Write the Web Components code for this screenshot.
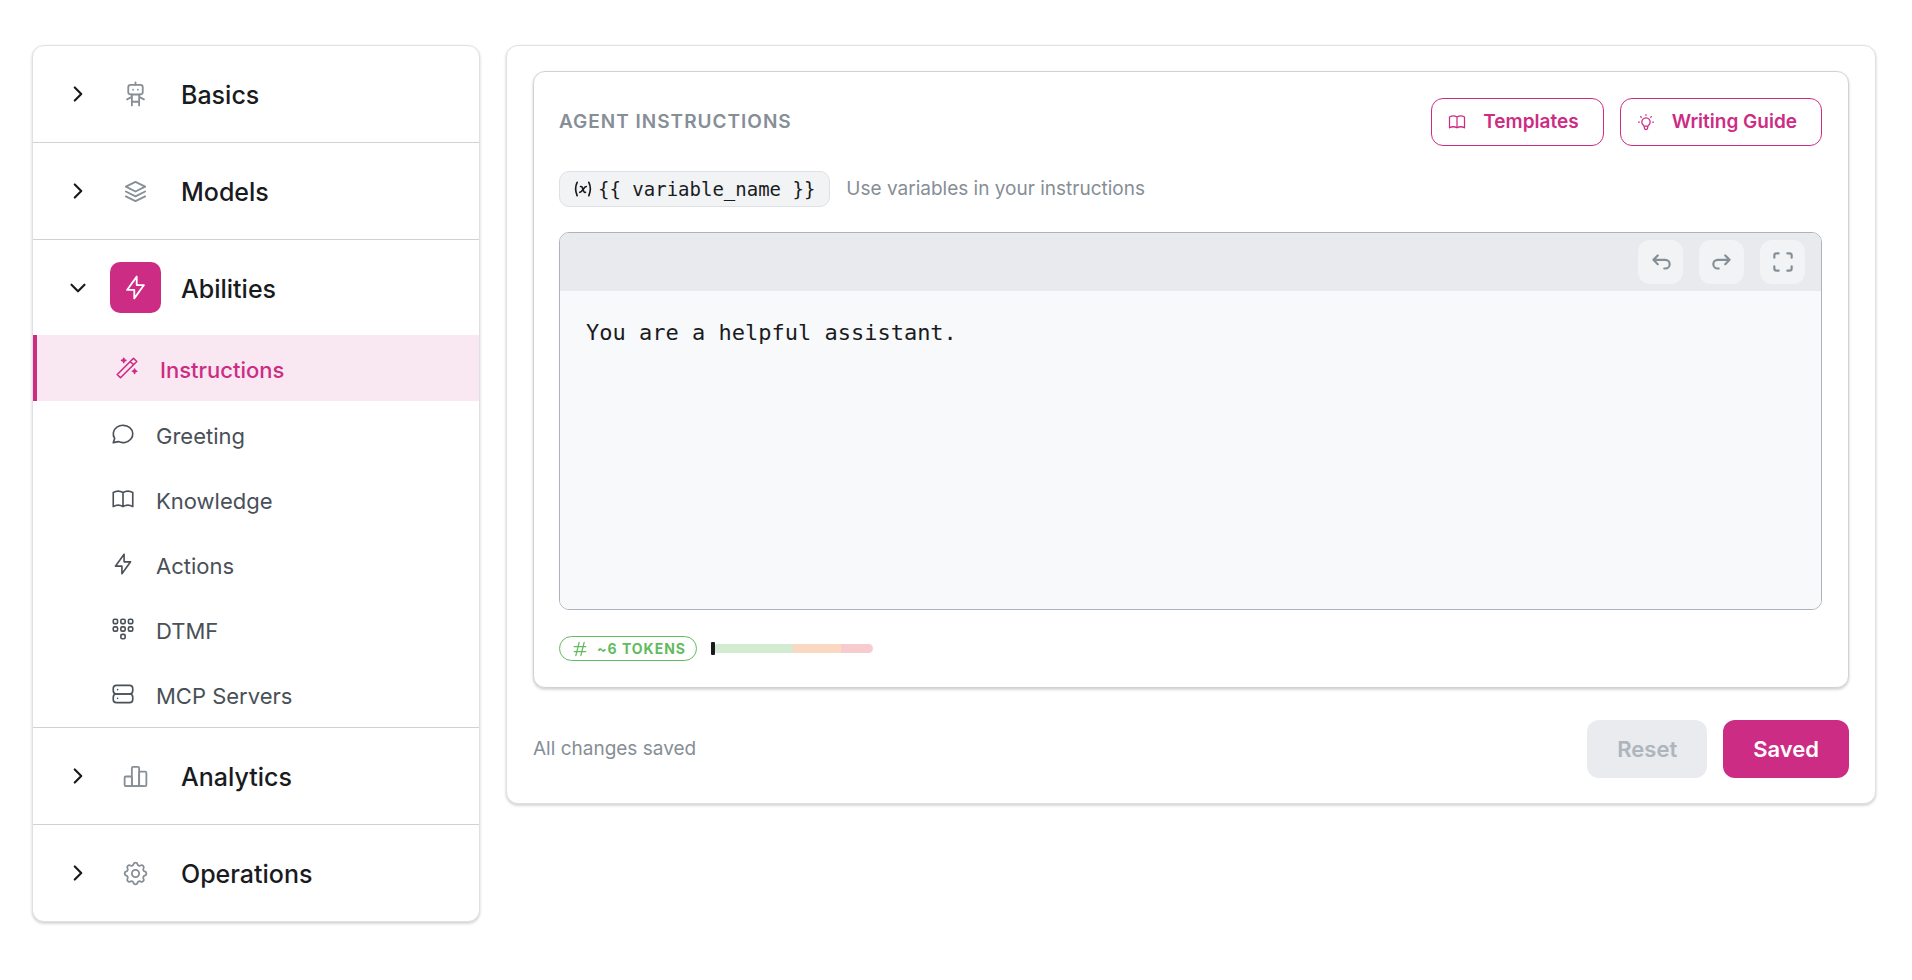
<!DOCTYPE html>
<html lang="en">
  <head>
    <meta charset="utf-8" />
    <title>Agent Instructions</title>
    <style>
      :root {
        --brand: #cd2c84;
        --brand-light: #f9e8f2;
        --ink: #1a1b1e;
        --text: #495057;
        --muted: #868e96;
        --line: #dee0e3;
        --divider: #cfd3d9;
        --mono: "DejaVu Sans Mono", monospace;
      }
      body {
        margin: 0;
        font-family: Inter, sans-serif;
        color: var(--ink);
        background: #fff;
      }
    </style>
  </head>
  <body>
    <agent-editor></agent-editor>

    <script>
      // 24x24 stroke icons
      const ICONS = {
        right: '<path d="M9 6l6 6l-6 6"/>',
        down: '<path d="M6 9l6 6l6 -6"/>',
        robot:
          '<path d="M6 4m0 2a2 2 0 0 1 2 -2h8a2 2 0 0 1 2 2v4a2 2 0 0 1 -2 2h-8a2 2 0 0 1 -2 -2z"/><path d="M12 2v2M9 12v9M15 12v9M5 16l4 -2M15 14l4 2M9 18h6M10 8v.01M14 8v.01"/>',
        stack:
          '<path d="M12 4l-8 4l8 4l8 -4l-8 -4M4 12l8 4l8 -4M4 16l8 4l8 -4"/>',
        bolt: '<path d="M13 3v7h6l-8 11v-7h-6l8 -11"/>',
        wand: '<path d="M6 21l15 -15l-3 -3l-15 15l3 3M15 6l3 3M9 3a2 2 0 0 0 2 2a2 2 0 0 0 -2 2a2 2 0 0 0 -2 -2a2 2 0 0 0 2 -2M19 13a2 2 0 0 0 2 2a2 2 0 0 0 -2 2a2 2 0 0 0 -2 -2a2 2 0 0 0 2 -2"/>',
        message:
          '<path d="M3 20l1.3 -3.9c-2.324 -3.437 -1.426 -7.872 2.1 -10.374c3.526 -2.501 8.59 -2.296 11.845 .48c3.255 2.777 3.695 7.266 1.029 10.501c-2.666 3.235 -7.615 4.215 -11.574 2.293l-4.7 1"/>',
        book: '<path d="M3 19a9 9 0 0 1 9 0a9 9 0 0 1 9 0M3 6a9 9 0 0 1 9 0a9 9 0 0 1 9 0M3 6v13M12 6v13M21 6v13"/>',
        dialpad: [
          [3, 3], [10, 3], [17, 3],
          [3, 10], [10, 10], [17, 10],
          [10, 17],
        ]
          .map(([x, y]) => `<rect x="${x}" y="${y}" width="4" height="4" rx="1.300"/>`)
          .join(""),
        server:
          '<rect x="3" y="4" width="18" height="8" rx="3"/><rect x="3" y="12" width="18" height="8" rx="3"/><path d="M7 8v.01M7 16v.01"/>',
        chart:
          '<rect x="3" y="12" width="6" height="8" rx="1"/><rect x="9" y="4" width="6" height="16" rx="1"/><rect x="15" y="8" width="6" height="12" rx="1"/><path d="M4 20h14"/>',
        gear: '<path d="M10.325 4.317c.426 -1.756 2.924 -1.756 3.35 0a1.724 1.724 0 0 0 2.573 1.066c1.543 -.94 3.31 .826 2.37 2.37a1.724 1.724 0 0 0 1.065 2.572c1.756 .426 1.756 2.924 0 3.35a1.724 1.724 0 0 0 -1.066 2.573c.94 1.543 -.826 3.31 -2.37 2.37a1.724 1.724 0 0 0 -2.572 1.065c-.426 1.756 -2.924 1.756 -3.35 0a1.724 1.724 0 0 0 -2.573 -1.066c-1.543 .94 -3.31 -.826 -2.37 -2.37a1.724 1.724 0 0 0 -1.065 -2.572c-1.756 -.426 -1.756 -2.924 0 -3.35a1.724 1.724 0 0 0 1.066 -2.573c-.94 -1.543 .826 -3.31 2.37 -2.37c1 .608 2.296 .07 2.572 -1.065z"/><path d="M9 12a3 3 0 1 0 6 0a3 3 0 0 0 -6 0"/>',
        bulb: '<path d="M3 12h1M12 3v1M20 12h1M5.6 5.6l.7 .7M18.4 5.6l-.7 .7M9 16a5 5 0 1 1 6 0a3.500 3.500 0 0 0 -1 3a2 2 0 0 1 -4 0a3.500 3.500 0 0 0 -1 -3M9.700 17h4.600"/>',
        variable:
          '<path d="M5 4c-2.500 5 -2.500 10 0 16m14 -16c2.500 5 2.500 10 0 16m-10 -11h1c1 0 1 1 2.016 3.527c.984 2.473 .984 3.473 1.984 3.473h1"/><path d="M8 16c1.500 0 3 -2 4 -3.500s2.500 -3.500 4 -3.500"/>',
        undo: '<path d="M9 14l-4 -4l4 -4M5 10h11a4 4 0 1 1 0 8h-1"/>',
        redo: '<path d="M15 14l4 -4l-4 -4M19 10h-11a4 4 0 1 0 0 8h1"/>',
        expand:
          '<path d="M4 8v-2a2 2 0 0 1 2 -2h2M4 16v2a2 2 0 0 0 2 2h2M16 4h2a2 2 0 0 1 2 2v2M16 20h2a2 2 0 0 0 2 -2v-2"/>',
        hash: '<path d="M5 9h14M5 15h14M11 4l-4 16M17 4l-4 16"/>',
      };

      class UiIcon extends HTMLElement {
        connectedCallback() {
          const size = this.getAttribute("size") || 26;
          const stroke = this.getAttribute("stroke") || 1.5;
          this.attachShadow({ mode: "open" }).innerHTML = `
            <style>
              :host { display: inline-flex; flex: none; }
              svg { display: block; }
            </style>
            <svg width="${size}" height="${size}" viewBox="0 0 24 24" fill="none"
              stroke="currentColor" stroke-width="${stroke}" stroke-linecap="round"
              stroke-linejoin="round" aria-hidden="true">${ICONS[this.getAttribute("name")]}</svg>
          `;
        }
      }
      customElements.define("ui-icon", UiIcon);

      class UiCard extends HTMLElement {
        connectedCallback() {
          this.attachShadow({ mode: "open" }).innerHTML = `
            <style>
              :host {
                display: block;
                box-sizing: border-box;
                border: 1px solid var(--card-line, var(--line));
                border-radius: 12px;
                background: #fff;
                box-shadow: 0 1px 3px rgba(0, 0, 0, 0.1), 0 2px 3px rgba(0, 0, 0, 0.1);
                overflow: hidden;
              }
            </style>
            <slot></slot>
          `;
        }
      }
      customElements.define("ui-card", UiCard);

      class NavSection extends HTMLElement {
        connectedCallback() {
          const open = this.hasAttribute("open");
          this.attachShadow({ mode: "open" }).innerHTML = `
            <style>
              :host { display: block; }
              :host(:not(:first-child)) { border-top: 1px solid var(--divider); }
              button {
                display: flex;
                align-items: center;
                width: 100%;
                height: 96px;
                padding: 0 32px;
                border: 0;
                background: none;
                font: 500 25px/32px Inter, sans-serif;
                color: var(--ink);
                text-align: left;
                cursor: pointer;
              }
              :host([open]) button { height: 95px; }
              .badge {
                display: grid;
                place-items: center;
                width: 51px;
                height: 51px;
                margin: 0 20px 0 19px;
                border-radius: 10px;
                color: var(--muted);
              }
              :host([open]) .badge { background: var(--brand); color: #fff; }
              .label { padding-top: 2px; }
              .items { padding-bottom: 1px; }
            </style>
            <button type="button" aria-expanded="${open}">
              <ui-icon name="${open ? "down" : "right"}" stroke="2"></ui-icon>
              <span class="badge"><ui-icon name="${this.getAttribute("icon")}" size="29"></ui-icon></span>
              <span class="label">${this.getAttribute("label")}</span>
            </button>
            ${open ? '<div class="items"><slot></slot></div>' : ""}
          `;
        }
      }
      customElements.define("nav-section", NavSection);

      class NavItem extends HTMLElement {
        connectedCallback() {
          this.attachShadow({ mode: "open" }).innerHTML = `
            <style>
              :host { display: block; }
              a {
                display: flex;
                align-items: center;
                gap: 20px;
                box-sizing: border-box;
                height: 65px;
                padding-left: 77px;
                font-size: 22px;
                line-height: 32px;
                color: var(--text);
                text-decoration: none;
              }
              :host([active]) a {
                height: 66px;
                border-left: 4px solid var(--brand);
                background: var(--brand-light);
                color: var(--brand);
                font-weight: 500;
              }
              .label { padding-top: 4px; }
            </style>
            <a href="#">
              <ui-icon name="${this.getAttribute("icon")}"></ui-icon>
              <span class="label"><slot></slot></span>
            </a>
          `;
        }
      }
      customElements.define("nav-item", NavItem);

      class UiButton extends HTMLElement {
        connectedCallback() {
          const icon = this.getAttribute("icon");
          this.attachShadow({ mode: "open" }).innerHTML = `
            <style>
              :host { display: inline-flex; }
              button {
                display: flex;
                align-items: center;
                height: 58px;
                padding: 0 30px;
                border: 0;
                border-radius: 12px;
                background: var(--brand);
                color: #fff;
                font: 600 22px/32px Inter, sans-serif;
                cursor: pointer;
              }
              button:disabled { background: #e9ebee; color: #adb5bd; }
              :host([outline]) button {
                gap: 16px;
                height: 48px;
                padding: 0 24px 0 15px;
                border: 1px solid var(--brand);
                background: #fff;
                color: var(--brand);
                font-size: 19px;
              }
            </style>
            <button type="button" ${this.hasAttribute("disabled") ? "disabled" : ""}>
              ${icon ? `<ui-icon name="${icon}" size="20"></ui-icon>` : ""}<slot></slot>
            </button>
          `;
        }
      }
      customElements.define("ui-button", UiButton);

      class ToolButton extends HTMLElement {
        connectedCallback() {
          this.attachShadow({ mode: "open" }).innerHTML = `
            <style>
              :host { display: block; }
              button {
                display: grid;
                place-items: center;
                width: 45px;
                height: 44px;
                padding: 0;
                border: 0;
                border-radius: 12px;
                background: #f1f3f5;
                color: var(--muted);
                cursor: pointer;
              }
            </style>
            <button type="button" aria-label="${this.getAttribute("label")}">
              <ui-icon name="${this.getAttribute("icon")}" stroke="2"></ui-icon>
            </button>
          `;
        }
      }
      customElements.define("tool-button", ToolButton);

      class PromptEditor extends HTMLElement {
        connectedCallback() {
          this.attachShadow({ mode: "open" }).innerHTML = `
            <style>
              :host {
                display: block;
                border: 1px solid #adb3bd;
                border-radius: 10px;
                overflow: hidden;
              }
              .bar {
                display: flex;
                justify-content: flex-end;
                align-items: center;
                gap: 16px;
                height: 58px;
                padding-right: 16px;
                background: #e9eaee;
              }
              textarea {
                display: block;
                box-sizing: border-box;
                width: 100%;
                height: 318px;
                padding: 24px 26px;
                border: 0;
                outline: 0;
                resize: none;
                background: #f8f9fb;
                color: var(--ink);
                font: 22px/36px var(--mono);
              }
            </style>
            <div class="bar">
              <tool-button icon="undo" label="Undo"></tool-button>
              <tool-button icon="redo" label="Redo"></tool-button>
              <tool-button icon="expand" label="Fullscreen"></tool-button>
            </div>
            <textarea aria-label="Agent instructions" spellcheck="false"></textarea>
          `;
          this.shadowRoot.querySelector("textarea").value = this.getAttribute("value");
        }
      }
      customElements.define("prompt-editor", PromptEditor);

      class TokenMeter extends HTMLElement {
        connectedCallback() {
          this.attachShadow({ mode: "open" }).innerHTML = `
            <style>
              :host { display: flex; align-items: center; gap: 16px; }
              .count {
                display: flex;
                align-items: center;
                gap: 7px;
                box-sizing: border-box;
                height: 25px;
                padding: 0 10px;
                border: 1px solid #62bb5f;
                border-radius: 13px;
                color: #62bb5f;
                font-size: 14px;
                font-weight: 700;
                letter-spacing: 1px;
                text-transform: uppercase;
              }
              .track {
                position: relative;
                width: 160px;
                height: 9px;
                border-radius: 5px;
                background: linear-gradient(to right, #d3ebd1 50%, #fad8c2 50% 80%, #f7cccf 80%);
              }
              .mark {
                position: absolute;
                top: -2px;
                left: -2px;
                width: 4px;
                height: 13px;
                border-radius: 1px;
                background: var(--ink);
              }
            </style>
            <span class="count"><ui-icon name="hash" size="20"></ui-icon><slot></slot></span>
            <div class="track"><div class="mark"></div></div>
          `;
        }
      }
      customElements.define("token-meter", TokenMeter);

      class AgentEditor extends HTMLElement {
        connectedCallback() {
          this.attachShadow({ mode: "open" }).innerHTML = `
            <style>
              :host {
                display: grid;
                grid-template-columns: 448px minmax(0, 1fr);
                align-items: start;
                gap: 26px;
                padding: 45px 36px 45px 32px;
              }
              .page { padding: 25px 26px; }
              .panel { --card-line: var(--divider); padding: 26px 26px 26px 25px; }
              header, .hint, footer { display: flex; align-items: center; }
              header { gap: 16px; }
              h2 {
                flex: 1;
                margin: 0;
                font-size: 19px;
                line-height: 28px;
                font-weight: 600;
                letter-spacing: 1px;
                text-transform: uppercase;
                color: var(--muted);
              }
              .hint {
                gap: 16px;
                margin: 25px 0;
                font-size: 19px;
                line-height: 28px;
                color: var(--muted);
              }
              code {
                display: flex;
                align-items: center;
                gap: 5px;
                box-sizing: border-box;
                height: 36px;
                padding: 0 14px 0 13px;
                border: 1px solid var(--line);
                border-radius: 10px;
                background: #f1f3f5;
                color: var(--ink);
                font: 19px/28px var(--mono);
              }
              token-meter { margin-top: 26px; }
              footer { gap: 16px; margin-top: 32px; }
              footer p {
                flex: 1;
                margin: 0;
                font-size: 19px;
                line-height: 28px;
                color: var(--muted);
              }
            </style>
            <ui-card>
              <nav>
                <nav-section icon="robot" label="Basics"></nav-section>
                <nav-section icon="stack" label="Models"></nav-section>
                <nav-section icon="bolt" label="Abilities" open>
                  <nav-item icon="wand" active>Instructions</nav-item>
                  <nav-item icon="message">Greeting</nav-item>
                  <nav-item icon="book">Knowledge</nav-item>
                  <nav-item icon="bolt">Actions</nav-item>
                  <nav-item icon="dialpad">DTMF</nav-item>
                  <nav-item icon="server">MCP Servers</nav-item>
                </nav-section>
                <nav-section icon="chart" label="Analytics"></nav-section>
                <nav-section icon="gear" label="Operations"></nav-section>
              </nav>
            </ui-card>
            <ui-card class="page">
              <ui-card class="panel">
                <header>
                  <h2>Agent Instructions</h2>
                  <ui-button outline icon="book">Templates</ui-button>
                  <ui-button outline icon="bulb">Writing Guide</ui-button>
                </header>
                <div class="hint">
                  <code><ui-icon name="variable" size="20" stroke="2"></ui-icon>{{ variable_name }}</code>
                  <span>Use variables in your instructions</span>
                </div>
                <prompt-editor value="You are a helpful assistant."></prompt-editor>
                <token-meter>~6 tokens</token-meter>
              </ui-card>
              <footer>
                <p>All changes saved</p>
                <ui-button disabled>Reset</ui-button>
                <ui-button>Saved</ui-button>
              </footer>
            </ui-card>
          `;
        }
      }
      customElements.define("agent-editor", AgentEditor);
    </script>
  </body>
</html>
